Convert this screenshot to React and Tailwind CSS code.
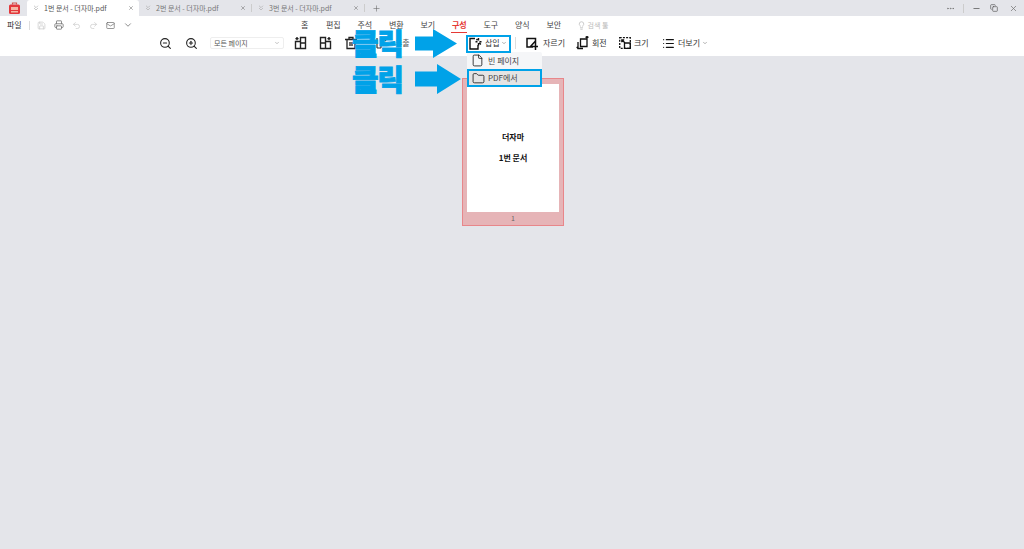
import React from "react";
import { ChevronDown, ChevronsDown, Ellipsis, File, Folder, Lightbulb, List, Mail, Minus, Plus, Printer, Redo2, Save, Undo2, X, ZoomIn, ZoomOut, Copy } from "lucide-react";

const font = "font-['Noto_Sans_CJK_KR','Noto_Sans',sans-serif]";

const menus = ["홈", "편집", "주석", "변환", "보기", "구성", "도구", "양식", "보안"];

function Tab({ title, active, width }) {
  return (
    <div className={`flex items-center h-4 pl-[5px] pr-[5px] ${width} ${active ? "bg-white rounded-t-[3px] text-[#555]" : "text-[#777]"}`}>
      <ChevronsDown className="w-[8px] h-[8px] text-[#aaa] mr-[4px]" strokeWidth={2} />
      <span className="text-[7px] leading-none whitespace-nowrap flex-1">{title}</span>
      <X className="w-[6px] h-[6px] text-[#666]" strokeWidth={2} />
    </div>
  );
}

function PageIn({ flip }) {
  return (
    <svg width="13" height="14" viewBox="0 0 13 14" fill="none" stroke="#222" strokeWidth="1.4" className={flip ? "-scale-x-100" : ""}>
      <path d="M1.5 1.5h5v11h-5zM1.5 7h5M6.5 5.5h5v7h-5" />
      <path d="M10 1v3.2M8.4 2.6h3.2" />
    </svg>
  );
}

function Callout({ className, arrowW, arrowH, head, shaft }) {
  const mid = arrowH / 2;
  return (
    <div className={`absolute left-[352px] flex items-center ${className}`}>
      <span className="w-[56px] -mt-[3px] text-[29px] leading-[30px] font-black whitespace-nowrap text-[#00a2e8] tracking-[-1.500px] [-webkit-text-stroke:0.8px_#00a2e8]">클릭</span>
      <svg width={arrowW} height={arrowH} viewBox={`0 0 ${arrowW} ${arrowH}`} fill="#00a2e8" className="ml-[7px]">
        <path d={`M0 ${mid - shaft}H${head}V0L${arrowW} ${mid}L${head} ${arrowH}V${mid + shaft}H0z`} />
      </svg>
    </div>
  );
}

export default function App() {
  return (
    <div className={`relative w-[1024px] h-[549px] overflow-hidden bg-[#e4e5ea] ${font}`}>
      {/* tab bar */}
      <div className="flex items-center h-4 bg-[#e4e5ea]">
        <div className="w-[27px] pl-[1px] flex justify-center">
          <svg width="11" height="12" viewBox="0 0 11 12">
            <path d="M3.5 2.5V1h4v1.500" fill="none" stroke="#d0544c" strokeWidth="1.2" />
            <rect x="0" y="2.500" width="11" height="9.500" rx="1.500" fill="#e3383c" />
            <rect x="2" y="5" width="7" height="3" fill="#f4b7a5" />
            <rect x="2" y="9" width="7" height="1.500" fill="#f4b7a5" />
          </svg>
        </div>
        <Tab title="1번 문서 - 더자마.pdf" active width="w-[112px]" />
        <Tab title="2번 문서 - 더자마.pdf" width="w-[112px]" />
        <div className="w-px h-[8px] bg-[#ccc]" />
        <Tab title="3번 문서 - 더자마.pdf" width="w-[112px]" />
        <div className="w-px h-[8px] bg-[#ccc]" />
        <Plus className="w-[9px] h-[9px] text-[#666] ml-[7px]" strokeWidth={1.5} />
        <div className="flex-1" />
        <Ellipsis className="w-[9px] h-[9px] text-[#777]" />
        <div className="w-px h-[9px] bg-[#ccc] mx-[8px]" />
        <Minus className="w-[9px] h-[9px] text-[#555] mr-[9px]" />
        <Copy className="w-[8px] h-[8px] text-[#555] mr-[11px]" />
        <X className="w-[9px] h-[9px] text-[#777] mr-[6px]" />
      </div>

      {/* quick access + menu row */}
      <div className="flex items-center h-[18px] bg-white">
        <span className="ml-[7px] text-[8px] text-[#333] w-[22px]">파일</span>
        <div className="w-px h-[9px] bg-[#ddd] mr-[7px]" />
        <div className="flex items-center gap-[8px] w-[96px]">
          <Save className="w-[9px] h-[9px] text-[#ccc]" />
          <Printer className="w-[10px] h-[10px] text-[#777]" />
          <Undo2 className="w-[9px] h-[9px] text-[#ccc]" />
          <Redo2 className="w-[9px] h-[9px] text-[#ccc]" />
          <Mail className="w-[9px] h-[9px] text-[#777]" />
          <ChevronDown className="w-[10px] h-[10px] text-[#777]" />
        </div>
        <div className="flex items-center ml-[153px]">
          {menus.map((m) => (
            <div key={m} className={`relative text-center text-[8px] leading-[18px] ${m === "홈" ? "w-[31.5px] pl-[6px]" : "w-[31.5px]"} ${m === "구성" ? "text-[#e53935] font-bold" : "text-[#444]"}`}>
              {m}
              {m === "구성" && <div className="absolute left-[7px] right-[8px] bottom-[1px] h-px bg-[#e53935]" />}
            </div>
          ))}
        </div>
        <Lightbulb className="w-[9px] h-[9px] text-[#bbb] ml-[7px] mr-[2px]" />
        <span className="text-[7px] text-[#bbb]">검색 툴</span>
      </div>

      {/* ribbon */}
      <div className="flex items-center h-[22px] pb-[4px] bg-white text-[8px] text-[#333]">
        <div className="w-[159px]" />
        <ZoomOut className="w-[13px] h-[13px] text-[#222]" />
        <ZoomIn className="w-[13px] h-[13px] text-[#222] ml-[13px]" />
        <div className="flex items-center justify-between w-[74px] h-[12px] ml-[12px] px-[3px] rounded-[2px] border border-[#eee] text-[7px] text-[#555]">
          모든 페이지
          <ChevronDown className="w-[6px] h-[6px] text-[#888]" />
        </div>
        <div className="flex items-center gap-[12px] ml-[10px]">
          <PageIn flip />
          <PageIn />
          <svg width="14" height="14" viewBox="0 0 14 14" fill="none" stroke="#222" strokeWidth="1.3"><path d="M1 3.5h12M3 3.5v9h8v-9M5 3V1.500h4V3M6 6v4M8 6v4" /></svg>
        </div>
        <div className="flex items-center w-[107px] pl-[17px] gap-[8px] text-[#555]">
          <svg width="12" height="12" viewBox="0 0 12 12" fill="none" stroke="#333" strokeWidth="1.2"><path d="M2 1v10M6 3v8M2 11h4M9 2l2 2" /></svg>
          <span>추출</span>
        </div>
        <div className="flex items-center w-[50px] pl-[4px] gap-[3px]">
          <svg width="13" height="13" viewBox="0 0 13 13" fill="none" stroke="#111" strokeWidth="1.4"><path d="M6 1.500H1v10.500h8V8M9.500 1v2.500M9.500 6v2.500M6.500 4.700h2M10.500 4.700h2M7.500 2l1 1.300M11.800 7.500l-1.500-1.800" /></svg>
          <span>삽입</span>
          <ChevronDown className="w-[6px] h-[6px] text-[#666] -ml-[2px]" />
        </div>
        <div className="w-px h-3 bg-[#ddd]" />
        <div className="flex items-center ml-[10px] gap-[4px] w-[50px]">
          <svg width="13" height="13" viewBox="0 0 13 13" fill="none" stroke="#111" strokeWidth="1.500"><path d="M9.500 7V1.500H1V10h6M4 10 9.500 4M5 9.500h7M9.500 6v7" /></svg>
          <span>자르기</span>
        </div>
        <div className="flex items-center gap-[2px] w-[43px]">
          <svg width="14" height="14" viewBox="0 0 14 14" fill="none" stroke="#111" strokeWidth="1.300"><path d="M4.500 3h6.500v7.500H4.500zM11 0.500v2.500M12.500 1.500 11 .5 9.500 1.500M2 6v6.500h5M.7 10.800 2 12.500" /></svg>
          <span>회전</span>
        </div>
        <div className="flex items-center gap-[3px] w-[43px]">
          <svg width="12" height="12" viewBox="0 0 12 12" fill="none" stroke="#111" strokeWidth="1.300"><rect x="0.700" y="0.700" width="10.600" height="10.600" strokeDasharray="2 1.200" /><path d="M5.500 6h5.800v5.300H5.500zM2.800 2.800l3 3M2.800 5.200V2.800h2.400" /></svg>
          <span>크기</span>
        </div>
        <div className="flex items-center gap-[3px]">
          <List className="w-[13px] h-[13px] text-[#111]" strokeWidth={2.2} />
          <span>더보기</span>
          <ChevronDown className="w-[6px] h-[6px] text-[#666] -ml-[1px]" />
        </div>
      </div>

      {/* page thumbnail */}
      <div className="pt-[22px] pl-[462px]">
        <div className="w-[102px] h-[148px] border border-[#e8868a] bg-[#e6b4b7] px-[4px] pt-[5px] flex flex-col">
          <div className="h-[128px] bg-white flex flex-col items-center text-[8px] font-bold text-[#111]">
            <span className="mt-[48px] leading-[10px]">더자마</span>
            <span className="mt-[11px] leading-[10px]">1번 문서</span>
          </div>
          <div className="text-center text-[7px] leading-[12px] text-[#666]">1</div>
        </div>
      </div>

      {/* insert dropdown */}
      <div className="absolute left-[467px] top-[52px] w-[75px] bg-[#f5f6f8] rounded-[2px] text-[8px] text-[#444]">
        <div className="flex items-center h-[17px] pl-[4px] gap-[4px]">
          <File className="w-[13px] h-[13px] text-[#222]" strokeWidth={1.6} />
          <span>빈 페이지</span>
        </div>
        <div className="flex items-center h-[18px] pl-[3px] gap-[3px] bg-[#e4e4e4] border-2 border-[#00a2e8]">
          <Folder className="w-[13px] h-[13px] text-[#222]" strokeWidth={1.6} />
          <span>PDF에서</span>
        </div>
      </div>

      {/* annotation overlays */}
      <div className="absolute left-[466px] top-[35px] w-[45px] h-[18px] border-2 border-[#00a2e8]" />
      <Callout className="top-[29px]" arrowW={42} arrowH={29} head={18} shaft={7} />
      <Callout className="top-[64px]" arrowW={46} arrowH={30} head={22} shaft={7.5} />
    </div>
  );
}
